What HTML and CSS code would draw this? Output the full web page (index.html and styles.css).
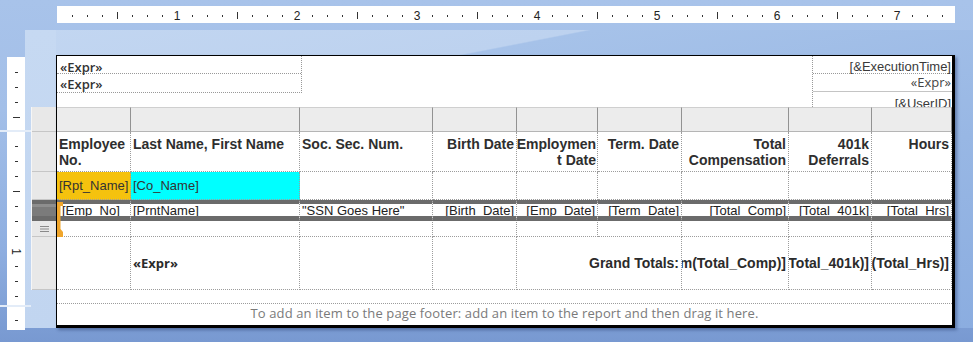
FILE: index.html
```html
<!DOCTYPE html>
<html lang="en">
<head>
  <meta charset="UTF-8" />
  <title>Report Layout</title>
  <link rel="stylesheet" href="styles.css">
</head>
<body>

  <div class="workspace">
    <div class="backdrop"></div>

    <!-- horizontal ruler -->
    <div class="ruler-top">
      <i></i><i></i><i></i><b></b><i></i><i></i><i></i><span>1</span>
      <i></i><i></i><i></i><b></b><i></i><i></i><i></i><span>2</span>
      <i></i><i></i><i></i><b></b><i></i><i></i><i></i><span>3</span>
      <i></i><i></i><i></i><b></b><i></i><i></i><i></i><span>4</span>
      <i></i><i></i><i></i><b></b><i></i><i></i><i></i><span>5</span>
      <i></i><i></i><i></i><b></b><i></i><i></i><i></i><span>6</span>
      <i></i><i></i><i></i><b></b><i></i><i></i><i></i><span>7</span>
      <i></i><i></i><i></i>
    </div>

    <!-- vertical ruler -->
    <div class="ruler-left">
      <i></i><i></i><i></i><b></b>
      <em class="sep"></em>
      <i></i><i></i><i></i><b></b><i></i><i></i><i></i><span>1</span><i></i><i></i><i></i>
      <em class="sep sep-low"></em>
      <i></i>
    </div>

    <!-- row handles of the table -->
    <div class="row-handles">
      <div class="rh"></div>
      <div class="rh"></div>
      <div class="rh"></div>
      <div class="rh rh-detail"></div>
      <div class="rh rh-menu">
        <svg width="9" height="8" viewBox="0 0 9 8"><path d="M0 1.5h9M0 4h9M0 6.5h9" stroke="#8a8a8a" stroke-width="1"/></svg>
      </div>
      <div class="rh"></div>
    </div>

    <div class="report">
      <!-- page header -->
      <div class="page-header">
        <div class="hdr-left">
          <div class="hdr-line expr">«Expr»</div>
          <div class="hdr-line expr">«Expr»</div>
        </div>
        <div class="hdr-right">
          <div class="hdr-line">[&amp;ExecutionTime]</div>
          <div class="hdr-line expr">«Expr»</div>
          <div class="hdr-line">[&amp;UserID]</div>
        </div>
      </div>

      <!-- body table -->
      <div class="table">
        <div class="c hd"></div><div class="c hd"></div><div class="c hd"></div>
        <div class="c hd"></div><div class="c hd"></div><div class="c hd"></div>
        <div class="c hd"></div><div class="c hd"></div><div class="c hd"></div>

        <div class="c th">Employee No.</div>
        <div class="c th">Last Name, First Name</div>
        <div class="c th">Soc. Sec. Num.</div>
        <div class="c th r"><span>Birth Date</span></div>
        <div class="c th r tight"><span>Employmen</span><span>t Date</span></div>
        <div class="c th r"><span>Term. Date</span></div>
        <div class="c th r"><span>Total</span><span>Compensation</span></div>
        <div class="c th r"><span>401k</span><span>Deferrals</span></div>
        <div class="c th r"><span>Hours</span></div>

        <div class="c grp rpt">[Rpt_Name]</div>
        <div class="c grp co">[Co_Name]</div>
        <div class="c grp"></div><div class="c grp"></div><div class="c grp"></div>
        <div class="c grp"></div><div class="c grp"></div><div class="c grp"></div>
        <div class="c grp"></div>

        <div class="c dt first">[Emp_No]</div>
        <div class="c dt">[PrntName]</div>
        <div class="c dt">"SSN Goes Here"</div>
        <div class="c dt r"><span>[Birth_Date]</span></div>
        <div class="c dt r"><span>[Emp_Date]</span></div>
        <div class="c dt r"><span>[Term_Date]</span></div>
        <div class="c dt r"><span>[Total_Comp]</span></div>
        <div class="c dt r"><span>[Total_401k]</span></div>
        <div class="c dt r"><span>[Total_Hrs]</span></div>

        <div class="c"></div><div class="c"></div><div class="c"></div>
        <div class="c"></div><div class="c"></div><div class="c"></div>
        <div class="c"></div><div class="c"></div><div class="c"></div>

        <div class="c tot"></div>
        <div class="c tot expr-bold">«Expr»</div>
        <div class="c tot"></div>
        <div class="c tot"></div>
        <div class="c tot r span2"><span>Grand Totals:</span></div>
        <div class="c tot r"><span>[Sum(Total_Comp)]</span></div>
        <div class="c tot r"><span>[Sum(Total_401k)]</span></div>
        <div class="c tot r"><span>[Sum(Total_Hrs)]</span></div>
      </div>

      <!-- page footer -->
      <div class="page-footer">
        <div class="footer-hint">To add an item to the page footer: add an item to the report and then drag it here.</div>
      </div>

      <svg class="corner-mark" width="7" height="35" viewBox="0 0 7 35">
        <path d="M0 0H6V4H3.5V27L6 30V35H0Z" fill="#f0a62c"/>
      </svg>
    </div>
  </div>

</body>
</html>
```

FILE: styles.css
```css
* {
  box-sizing: border-box;
}
body {
  margin: 0;
  font-family: "Liberation Sans", Arial, sans-serif;
  color: #2b2b2b;
  background: #8fafe0;
}

/* designer surface */
.workspace {
  width: 973px;
  height: 342px;
  overflow: hidden;
  display: grid;
  grid-template-columns: 7px 18px 6px 25px 899px 18px;
  grid-template-rows: 6px 17px 32px 273px 14px;
  background: linear-gradient(180deg, #a8c3ea 0, #a3bfe8 110px, #8eaee0 250px, #7899d1 100%);
}
.backdrop {
  grid-column: 3 / 7;
  grid-row: 3 / 5;
  margin-top: 7px;
  background:
    linear-gradient(#c6d9f2, #c1d5f0) 0 0 / 31px 100% no-repeat,
    linear-gradient(169deg, #c2d6f1 0, #bdd2ef 22.6%, #a6c2e9 22.9%, #98b7e4 60%, #8badE0 100%);
}

/* rulers */
.ruler-top {
  grid-column: 5;
  grid-row: 2;
  margin-left: 1px;
  padding: 2px 0 0 7.5px;
  background: #fff;
  display: flex;
  align-items: center;
  font-size: 12px;
  color: #222;
}
.ruler-top > * {
  flex: none;
  width: 15px;
  display: flex;
  justify-content: center;
  font-style: normal;
  font-weight: normal;
}
.ruler-top i::before,
.ruler-top b::before {
  content: "";
  width: 1px;
  height: 2px;
  background: #333;
}
.ruler-top b::before {
  height: 7px;
}

.ruler-left {
  grid-column: 2;
  grid-row: 4 / 6;
  margin-top: 2px;
  height: 273px;
  padding-top: 7.5px;
  background: #fff;
  display: flex;
  flex-direction: column;
  font-size: 12px;
  color: #222;
}
.ruler-left > i,
.ruler-left > b,
.ruler-left > span {
  flex: none;
  height: 15px;
  display: flex;
  align-items: center;
  justify-content: center;
  font-style: normal;
  font-weight: normal;
}
.ruler-left i::before,
.ruler-left b::before {
  content: "";
  width: 3px;
  height: 1px;
  background: #333;
}
.ruler-left b::before {
  width: 7px;
}
.ruler-left span {
  transform: rotate(90deg);
}
.ruler-left .sep {
  flex: none;
  height: 14px;
  margin: 0 -6px 0 -7px;
  background: linear-gradient(transparent 5px, #e3ecf8 5px, #e3ecf8 7px, transparent 7px);
}
.ruler-left .sep-low {
  height: 9px;
  background: linear-gradient(transparent 1px, #e3ecf8 1px, #e3ecf8 3px, transparent 3px);
}

/* row handles on the left of the table */
.row-handles {
  grid-column: 4;
  grid-row: 4;
  margin-top: 52px;
  height: 183px;
  display: grid;
  grid-template-rows: 25px 40px 28px 22px 15px 53px;
  background: #e8e8e8;
  border-left: 1px solid #f6f6f6;
}
.rh {
  border-bottom: 1px solid #c6c6c6;
}
.rh-detail {
  border-bottom: 0;
  background: linear-gradient(#6b6b6b 0 4px, #8e8e8e 4px 7px, #7b7b7b 7px 16px, #6b6b6b 16px 21px, #e8e8e8 21px);
}
.rh-menu {
  display: flex;
  align-items: center;
  justify-content: center;
}

/* report page */
.report {
  grid-column: 5;
  grid-row: 4;
  position: relative;
  display: flex;
  flex-direction: column;
  background: #fff;
  border: solid #000;
  border-width: 1px 3px 3px 1px;
  box-shadow: 2px 2px 3px rgba(30, 50, 100, 0.45);
}
.expr {
  font-family: "Open Sans", "Liberation Sans", sans-serif;
  font-weight: 600;
  font-size: 13px;
  color: #333;
}

.page-header {
  height: 51px;
  flex: none;
  display: flex;
  justify-content: space-between;
  align-items: flex-start;
}
.hdr-left {
  width: 245px;
  border-right: 1px dotted #999;
  border-bottom: 1px dotted #999;
}
.hdr-left .hdr-line {
  height: 18px;
  line-height: 16px;
  padding: 3px 0 0 3px;
}
.hdr-left .hdr-line:first-child {
  border-bottom: 1px dotted #999;
}
.hdr-left .hdr-line + .hdr-line {
  padding-top: 2px;
}
.hdr-right {
  width: 140px;
  height: 51px;
  overflow: hidden;
  border-left: 1px dotted #999;
  text-align: right;
  font-size: 13px;
  color: #3a3a3a;
}
.hdr-right .hdr-line {
  height: 18px;
  line-height: 16px;
  padding: 3px 1px 0 0;
}
.hdr-right .hdr-line:first-child {
  border-bottom: 1px dotted #999;
}
.hdr-right .hdr-line.expr {
  height: 18px;
  padding-top: 0;
  font-weight: 400;
  color: #444;
  border-bottom: 1px solid #c4c4c4;
}
.hdr-right .hdr-line:last-child {
  padding-top: 4px;
}

/* table grid */
.table {
  flex: none;
  display: grid;
  grid-template-columns: 74px 169px 133px 84px 81px 84px 107px 83px 80px;
  grid-template-rows: 25px 40px 28px 22px 15px 53px;
}
.c {
  overflow: hidden;
  padding: 0 2px;
  border-right: 1px dotted #9c9c9c;
  border-bottom: 1px dotted #9c9c9c;
  font-size: 13px;
  white-space: nowrap;
}
.c.r {
  display: flex;
  flex-direction: column;
  align-items: flex-end;
}
.c.hd {
  background: #ececec;
  border-top: 1px solid #cfcfcf;
  border-right: 1px solid #929292;
  border-bottom: 1px solid #b5b5b5;
}
.c.th {
  padding-top: 4px;
  font-size: 14px;
  font-weight: bold;
  line-height: 16px;
  white-space: normal;
  color: #2e2e2e;
}
.c.th.r span {
  white-space: nowrap;
}
.c.th.tight {
  padding-left: 0;
  padding-right: 1px;
}
.c.grp {
  line-height: 27px;
  color: #333;
}
.c.rpt {
  background: #f5c20e;
}
.c.co {
  background: #00ffff;
}
.c.dt {
  align-self: start;
  height: 21px;
  line-height: 14px;
  border-top: 4px solid #6b6b6b;
  border-bottom: 5px solid #6b6b6b;
  color: #222;
}
.c.dt.first {
  padding-left: 5px;
}
.c.tot {
  line-height: 52px;
  font-size: 14px;
  font-weight: bold;
  color: #2b2b2b;
}
.c.tot.span2 {
  grid-column: span 2;
}
.c.expr-bold {
  font-family: "Open Sans", "Liberation Sans", sans-serif;
  font-size: 13px;
  font-weight: 700;
}

/* page footer */
.page-footer {
  flex: none;
  height: 35px;
  padding-top: 13px;
}
.footer-hint {
  height: 22px;
  border-top: 1px dotted #9c9c9c;
  text-align: center;
  font-family: "Open Sans", "Liberation Sans", sans-serif;
  font-size: 13px;
  letter-spacing: 0.12px;
  line-height: 19px;
  color: #7a7a7a;
}

/* selection corner on the detail group */
.corner-mark {
  position: absolute;
  left: 0;
  top: 146px;
}
```
